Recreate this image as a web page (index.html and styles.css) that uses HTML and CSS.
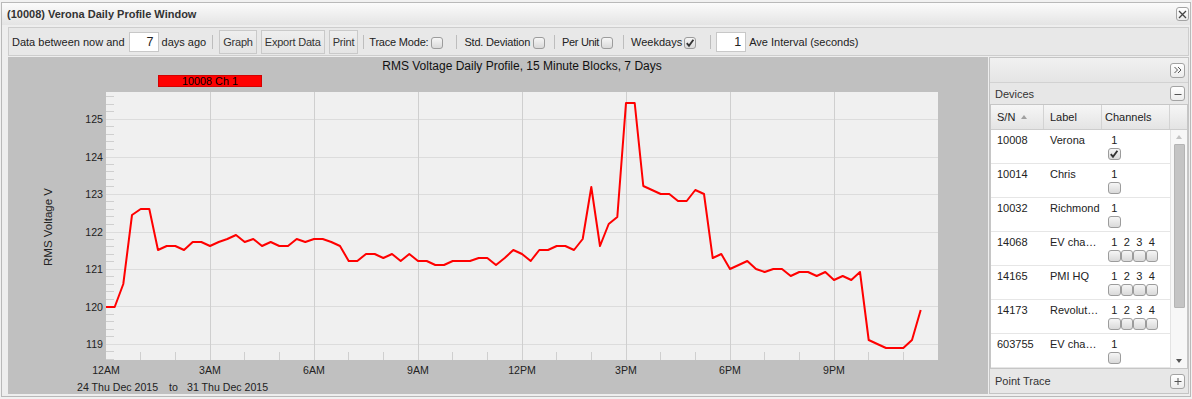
FILE: index.html
```html
<!DOCTYPE html>
<html>
<head>
<meta charset="utf-8">
<title>Verona Daily Profile Window</title>
<link rel="stylesheet" href="styles.css">
</head>
<body>
<div class="window">
  <div class="titlebar">
    <span class="title">(10008) Verona Daily Profile Window</span>
    <span class="close"><svg width="9" height="9" viewBox="0 0 9 9"><path d="M1 1L8 8M8 1L1 8" stroke="#444" stroke-width="1.3" fill="none"/></svg></span>
  </div>
  <div class="toolbar">
    <span class="lbl">Data between now and</span>
    <span class="num ml4">7</span>
    <span class="lbl ml3">days ago</span>
    <span class="sep ml6"></span>
    <span class="btn ml6">Graph</span>
    <span class="btn ml4">Export Data</span>
    <span class="btn ml4">Print</span>
    <span class="sep ml5"></span>
    <span class="lbl tight ml5">Trace Mode:</span>
    <span class="cb tcb ml3"></span>
    <span class="sep ml13"></span>
    <span class="lbl tight ml7">Std. Deviation</span>
    <span class="cb tcb ml3"></span>
    <span class="sep ml9"></span>
    <span class="lbl tighter ml7">Per Unit</span>
    <span class="cb tcb ml2"></span>
    <span class="sep ml10"></span>
    <span class="lbl ml7">Weekdays</span>
    <span class="cb tcb ml2"><svg width="10" height="10" viewBox="0 0 10 10"><path d="M1.8 5.2L4 7.8L8.4 1.8" stroke="#333" stroke-width="1.9" fill="none"/></svg></span>
    <span class="sep ml14"></span>
    <span class="num ml5">1</span>
    <span class="lbl ml3">Ave Interval (seconds)</span>
  </div>
  <div class="main">
    <div class="chart">
      <svg width="980" height="337" viewBox="0 0 980 337" font-family="Liberation Sans, Arial, sans-serif">
        <text x="514" y="12.5" font-size="12" text-anchor="middle" fill="#111">RMS Voltage Daily Profile, 15 Minute Blocks, 7 Days</text>
        <rect x="150.5" y="18.5" width="103" height="11" fill="#ff0000" stroke="#d40000"/>
        <text x="202" y="28" font-size="10.8" text-anchor="middle" fill="#000">10008 Ch 1</text>
        <rect x="98" y="35" width="832" height="268" fill="#f0f0f0"/>
        <g stroke="#dcdcdc" stroke-width="1" shape-rendering="crispEdges">
          <path d="M98 62.5H930M98 100H930M98 137.5H930M98 175H930M98 212.5H930M98 249.5H930M98 287H930"/>
        </g>
        <g stroke="#cfcfcf" stroke-width="1" shape-rendering="crispEdges">
          <path d="M202.5 35V303M306.5 35V303M410.5 35V303M514.5 35V303M618.5 35V303M722.5 35V303M826.5 35V303"/>
          <path d="M98 39.5h8M98 47h8M98 54.5h8M98 69.5h8M98 77h8M98 84.5h8M98 92h8M98 107h8M98 114.5h8M98 122h8M98 129.5h8M98 144.5h8M98 152h8M98 159.5h8M98 167h8M98 182h8M98 189.5h8M98 197h8M98 204.5h8M98 219.5h8M98 227h8M98 234.5h8M98 242h8M98 257h8M98 264.5h8M98 272h8M98 279.5h8M98 294.5h8M98 302h8"/>
          <path d="M132.5 295v8M167.5 295v8M236.5 295v8M271.5 295v8M340.5 295v8M375.5 295v8M444.5 295v8M479.5 295v8M548.5 295v8M583.5 295v8M652.5 295v8M687.5 295v8M756.5 295v8M791.5 295v8M860.5 295v8M895.5 295v8"/>
        </g>
        <g font-size="10.6" fill="#222" text-anchor="end">
          <text x="95" y="66">125</text>
          <text x="95" y="103.5">124</text>
          <text x="95" y="141">123</text>
          <text x="95" y="178.5">122</text>
          <text x="95" y="216">121</text>
          <text x="95" y="253.5">120</text>
          <text x="95" y="291">119</text>
        </g>
        <g font-size="10.6" fill="#222" text-anchor="middle">
          <text x="98" y="317">12AM</text>
          <text x="202" y="317">3AM</text>
          <text x="306" y="317">6AM</text>
          <text x="410" y="317">9AM</text>
          <text x="514" y="317">12PM</text>
          <text x="618" y="317">3PM</text>
          <text x="722" y="317">6PM</text>
          <text x="826" y="317">9PM</text>
        </g>
        <g font-size="10.6" fill="#222">
          <text x="69" y="334">24 Thu Dec 2015</text>
          <text x="161" y="334">to</text>
          <text x="179" y="334">31 Thu Dec 2015</text>
        </g>
        <text transform="translate(44,170) rotate(-90)" font-size="11.5" text-anchor="middle" fill="#222">RMS Voltage V</text>
        <polyline fill="none" stroke="#ff0000" stroke-width="2" stroke-linejoin="round" points="98,250 106.7,250 115.3,227 124,158 132.7,152 141.3,152 150,193 158.7,189 167.3,189 176,193 184.7,185 193.3,185 202,189 210.7,185 219.3,182 228,178 236.7,185 245.3,182 254,189 262.7,185 271.3,189 280,189 288.7,182 297.3,185 306,182 314.7,182 323.3,185 332,189 340.7,204 349.3,204 358,197 366.7,197 375.3,201 384,197 392.7,204 401.3,197 410,204 418.7,204 427.3,208 436,208 444.7,204 453.3,204 462,204 470.7,201 479.3,201 488,208 496.7,201 505.3,193 514,197 522.7,204 531.3,193 540,193 548.7,189 557.3,189 566,193 574.7,182 583.3,130 592,189 600.7,167 609.3,160 618,46 626.7,46 635.3,129 644,133 652.7,137 661.3,137 670,144 678.7,144 687.3,133 696,137 704.7,201 713.3,197 722,212 730.7,208 739.3,204 748,212 756.7,215 765.3,212 774,212 782.7,219 791.3,215 800,215 808.7,219 817.3,215 826,223 834.7,219 843.3,223 852,215 860.7,283 869.3,287 878,291 886.7,291 895.3,291 904,283 912.7,253"/>
      </svg>
    </div>
    <div class="side">
      <div class="side-top">
        <span class="tool"><svg width="10" height="10" viewBox="0 0 10 10"><path d="M1.5 2L4.5 5L1.5 8M5 2L8 5L5 8" stroke="#555" stroke-width="1" fill="none"/></svg></span>
      </div>
      <div class="panel-head">
        <span>Devices</span>
        <span class="tool"><svg width="10" height="10" viewBox="0 0 10 10"><path d="M1.5 5.5H8.5" stroke="#555" stroke-width="1" fill="none"/></svg></span>
      </div>
      <div class="grid">
        <div class="ghead">
          <div class="hc c-sn">S/N<span class="sort"></span></div>
          <div class="hc c-label">Label</div>
          <div class="hc c-ch">Channels</div>
          <div class="hc c-sc"></div>
        </div>
        <div class="gbody">
          <div class="rows">
            <div class="row"><div class="c-sn">10008</div><div class="c-label">Verona</div><div class="chs"><div class="ch"><span>1</span><span class="cb"><svg width="10" height="10" viewBox="0 0 10 10"><path d="M1.8 5.2L4 7.8L8.4 1.8" stroke="#333" stroke-width="1.9" fill="none"/></svg></span></div></div></div>
            <div class="row"><div class="c-sn">10014</div><div class="c-label">Chris</div><div class="chs"><div class="ch"><span>1</span><span class="cb"></span></div></div></div>
            <div class="row"><div class="c-sn">10032</div><div class="c-label">Richmond</div><div class="chs"><div class="ch"><span>1</span><span class="cb"></span></div></div></div>
            <div class="row"><div class="c-sn">14068</div><div class="c-label">EV cha…</div><div class="chs"><div class="ch"><span>1</span><span class="cb"></span></div><div class="ch"><span>2</span><span class="cb"></span></div><div class="ch"><span>3</span><span class="cb"></span></div><div class="ch"><span>4</span><span class="cb"></span></div></div></div>
            <div class="row"><div class="c-sn">14165</div><div class="c-label">PMI HQ</div><div class="chs"><div class="ch"><span>1</span><span class="cb"></span></div><div class="ch"><span>2</span><span class="cb"></span></div><div class="ch"><span>3</span><span class="cb"></span></div><div class="ch"><span>4</span><span class="cb"></span></div></div></div>
            <div class="row"><div class="c-sn">14173</div><div class="c-label">Revolut…</div><div class="chs"><div class="ch"><span>1</span><span class="cb"></span></div><div class="ch"><span>2</span><span class="cb"></span></div><div class="ch"><span>3</span><span class="cb"></span></div><div class="ch"><span>4</span><span class="cb"></span></div></div></div>
            <div class="row"><div class="c-sn">603755</div><div class="c-label">EV cha…</div><div class="chs"><div class="ch"><span>1</span><span class="cb"></span></div></div></div>
          </div>
          <div class="vscroll">
            <div class="arr"><span class="up"></span></div>
            <div class="thumb"></div>
            <div class="fill"></div>
            <div class="arr"><span class="down"></span></div>
          </div>
        </div>
      </div>
      <div class="panel-foot">
        <span>Point Trace</span>
        <span class="tool"><svg width="10" height="10" viewBox="0 0 10 10"><path d="M1.5 5.5H8.5M5 2V9" stroke="#555" stroke-width="1" fill="none"/></svg></span>
      </div>
    </div>
  </div>
</div>
</body>
</html>
```

FILE: styles.css
```css
* { box-sizing: border-box; }
html, body { margin: 0; padding: 0; }
body {
  background: #f1f1f1;
  font-family: "Liberation Sans", Arial, sans-serif;
  font-size: 11px;
  color: #222;
  width: 1192px;
  height: 399px;
  overflow: hidden;
}
.window {
  margin: 2px 0 0 1px;
  width: 1190px;
  height: 395px;
  border: 1px solid #b9b9b9;
  background: #eeeeee;
  display: flex;
  flex-direction: column;
}
.titlebar {
  height: 22px;
  flex: none;
  display: flex;
  align-items: center;
  justify-content: space-between;
  padding: 0 1px 0 5px;
  background: linear-gradient(#fbfbfb, #e4e4e4);
}
.title { font-weight: bold; font-size: 11px; color: #333; white-space: nowrap; }
.close {
  width: 13px; height: 14px;
  border: 1px solid #a3a3a3;
  border-radius: 3px;
  background: linear-gradient(#ffffff, #ebebeb);
  display: flex; align-items: center; justify-content: center;
}
.toolbar {
  height: 29px;
  flex: none;
  margin: 2px 1px 0 6px;
  border: 1px solid #cdcdcd;
  background: #e8e8e8;
  display: flex;
  align-items: center;
  padding-left: 3px;
  color: #222;
}
.lbl { white-space: nowrap; }
.tight { letter-spacing: -0.2px; }
.tighter { letter-spacing: -0.35px; }
.num {
  width: 30px; height: 20px;
  background: #fff;
  border: 1px solid #c8c8c8;
  text-align: right;
  padding-right: 4px;
  line-height: 18px;
  font-size: 12.5px;
  color: #222;
}
.btn {
  height: 24px;
  padding: 0 3px;
  border: 1px solid #c9c9c9;
  background: linear-gradient(#eeeeee, #e4e4e4);
  line-height: 22px;
  color: #333;
  white-space: nowrap;
  letter-spacing: -0.2px;
}
.sep { width: 1px; height: 14px; background: #bdbdbd; flex: none; }
.cb {
  width: 12px; height: 12px;
  flex: none;
  border: 1px solid #9c9c9c;
  border-radius: 3px;
  background: linear-gradient(#f6f6f6, #d9d9d9);
  display: inline-flex; align-items: center; justify-content: center;
}
.tcb { margin-top: 2px; }
.ml2 { margin-left: 2px; }
.ml3 { margin-left: 3px; }
.ml4 { margin-left: 4px; }
.ml5 { margin-left: 5px; }
.ml6 { margin-left: 6px; }
.ml7 { margin-left: 7px; }
.ml9 { margin-left: 9px; }
.ml10 { margin-left: 10px; }
.ml13 { margin-left: 13px; }
.ml14 { margin-left: 14px; }

.main {
  display: flex;
  gap: 1px;
  margin: 1px 1px 0 6px;
  height: 337px;
  flex: none;
}
.chart { width: 980px; height: 337px; background: #c0c0c0; flex: none; }
.chart svg { display: block; }

.side {
  width: 200px;
  height: 337px;
  flex: none;
  border: 1px solid #c4c4c4;
  background: #e6e6e6;
  display: flex;
  flex-direction: column;
}
.side-top {
  height: 25px; flex: none;
  border-bottom: 1px solid #d2d2d2;
  background: linear-gradient(#f1f1f1, #e5e5e5);
  display: flex; align-items: center; justify-content: flex-end;
  padding-right: 3px;
}
.tool {
  width: 15px; height: 15px;
  border: 1px solid #a3a3a3;
  border-radius: 3px;
  background: linear-gradient(#ffffff, #ececec);
  display: flex; align-items: center; justify-content: center;
}
.panel-head, .panel-foot {
  flex: none;
  display: flex; align-items: center; justify-content: space-between;
  padding: 0 3px 0 5px;
  background: #e7e7e7;
  color: #333;
}
.panel-head { height: 21px; }
.panel-foot { height: 24px; }
.grid {
  height: 265px; flex: none;
  border: 1px solid #c6c6c6;
  background: #fff;
  display: flex; flex-direction: column;
}
.ghead {
  height: 25px; flex: none;
  display: flex;
  border-bottom: 1px solid #cdcdcd;
  background: linear-gradient(#f6f6f6, #e4e4e4);
}
.hc {
  height: 24px; line-height: 24px;
  border-right: 1px solid #d3d3d3;
  color: #222;
  display: flex; align-items: center;
}
.hc:last-child { border-right: none; }
.c-sn { width: 53px; padding-left: 6px; flex: none; }
.c-label { width: 58px; padding-left: 6px; flex: none; white-space: nowrap; overflow: hidden; }
.hc.c-ch { width: 68px; padding-left: 3px; flex: none; }
.c-sc { flex: 1; }
.sort {
  width: 0; height: 0; margin-left: 6px;
  border-left: 3px solid transparent;
  border-right: 3px solid transparent;
  border-bottom: 4px solid #a0a0a0;
}
.gbody { flex: 1; display: flex; }
.rows { width: 179px; flex: none; }
.row {
  height: 34px;
  border-bottom: 1px solid #e6e6e6;
  display: flex;
  padding-top: 4px;
  line-height: 13px;
  color: #222;
}
.chs { display: flex; padding-left: 6px; }
.ch { width: 12.5px; display: flex; flex-direction: column; align-items: center; }
.ch .cb { width: 12.5px; margin-top: 1px; }
.vscroll {
  flex: 1;
  border-left: 1px solid #e3e3e3;
  background: #f7f7f7;
  display: flex; flex-direction: column;
}
.arr { height: 14px; flex: none; display: flex; align-items: center; justify-content: center; }
.up {
  width: 0; height: 0;
  border-left: 3.5px solid transparent;
  border-right: 3.5px solid transparent;
  border-bottom: 4px solid #c3c3c3;
}
.down {
  width: 0; height: 0;
  border-left: 3.5px solid transparent;
  border-right: 3.5px solid transparent;
  border-top: 4px solid #555;
}
.thumb {
  height: 164px; flex: none;
  margin: 0 2px 0 3px;
  background: #c4c4c4;
  border: 1px solid #b4b4b4;
  border-radius: 1px;
}
.fill { flex: 1; }
```
